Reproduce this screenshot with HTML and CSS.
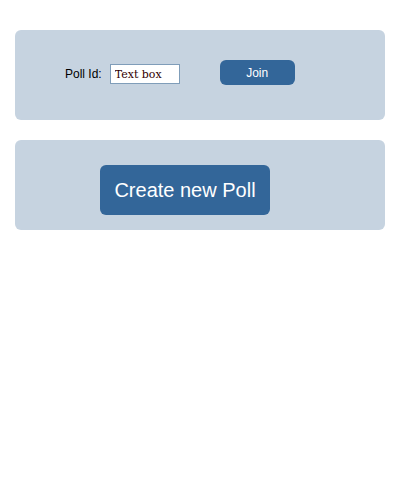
FILE: index.html
```html
<!DOCTYPE html>
<html>
<head>
<meta charset="utf-8">
<link rel="stylesheet" href="styles.css">
</head>
<body>
<div class="page">
  <div class="card card-join">
    <label class="label" for="poll">Poll Id:</label>
    <input id="poll" class="textbox" type="text" value="Text box">
    <button class="btn btn-join">Join</button>
  </div>
  <div class="card card-create">
    <button class="btn btn-create">Create new Poll</button>
  </div>
</div>
</body>
</html>
```
FILE: styles.css
```css
html, body {
  margin: 0;
  padding: 0;
  background: #ffffff;
}
.page {
  padding: 30px 15px;
  display: flex;
  flex-direction: column;
  gap: 20px;
  font-family: "Liberation Sans", Arial, sans-serif;
}
.card {
  background: #c6d3e0;
  border-radius: 6px;
  height: 90px;
  box-sizing: border-box;
  display: flex;
}
.card-join {
  padding: 30px 0 0 50px;
  align-items: flex-start;
}
.label {
  font-size: 12px;
  color: #000;
  margin-top: 7px;
  line-height: 14px;
}
.textbox {
  margin: 4px 0 0 8px;
  width: 70px;
  height: 20px;
  box-sizing: border-box;
  border: 1px solid #7f9db9;
  padding: 0 0 0 4px;
  font-family: "DejaVu Serif", "Liberation Serif", serif;
  font-size: 11px;
  color: #330000;
  background: #fff;
  outline: none;
}
.btn {
  background: #336699;
  color: #ffffff;
  border: none;
  font-family: "Liberation Sans", Arial, sans-serif;
  padding: 0;
  cursor: pointer;
}
.btn-join {
  margin-left: 40px;
  width: 75px;
  height: 25px;
  border-radius: 6px;
  font-size: 12px;
}
.card-create {
  padding: 25px 0 0 85px;
  align-items: flex-start;
}
.btn-create {
  width: 170px;
  height: 50px;
  border-radius: 6px;
  font-size: 20px;
}
```
